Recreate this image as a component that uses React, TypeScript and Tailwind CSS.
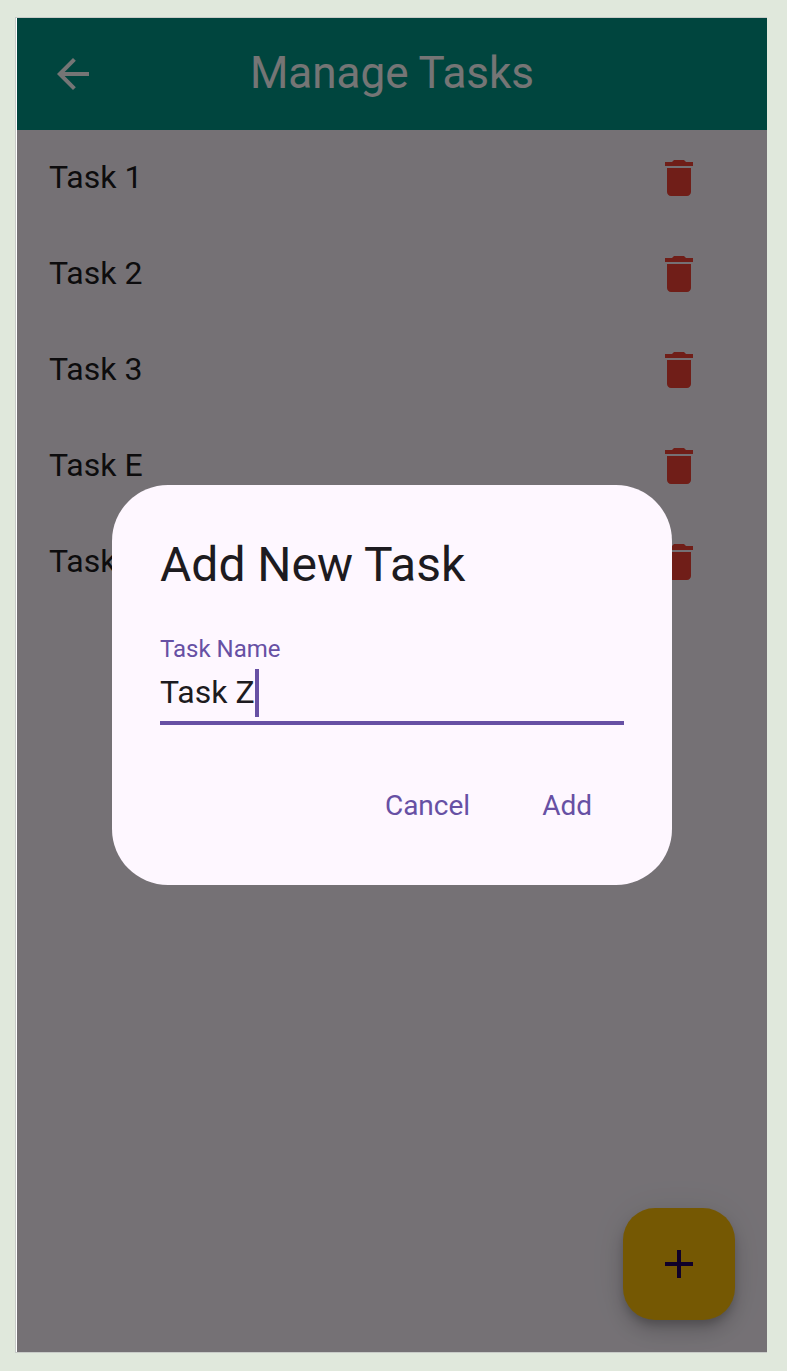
import { useState } from "react";

const tasks = ["Task 1", "Task 2", "Task 3", "Task E", "Task F"];

function Icon({ d }: { d: string }) {
  return (
    <svg viewBox="0 0 24 24" className="size-12 fill-current" aria-hidden="true">
      <path d={d} />
    </svg>
  );
}

const BACK = "M20 11H7.83l5.59-5.59L12 4l-8 8 8 8 1.41-1.41L7.83 13H20v-2z";
const TRASH =
  "M6 19c0 1.1.9 2 2 2h8c1.1 0 2-.9 2-2V7H6v12zM19 4h-3.5l-1-1h-5l-1 1H5v2h14V4z";
const PLUS = "M19 13h-6v6h-2v-6H5v-2h6V5h2v6h6v2z";

function Header() {
  return (
    <header className="grid h-28 grid-cols-[1fr_auto_1fr] items-center bg-[#009688] px-8 text-white">
      <button type="button" aria-label="Back" className="justify-self-start">
        <Icon d={BACK} />
      </button>
      <h1 className="pb-0.5 text-[44px] leading-[56px]">Manage Tasks</h1>
    </header>
  );
}

function TaskList() {
  return (
    <ul>
      {tasks.map((task) => (
        <li key={task} className="flex h-24 items-center justify-between pr-12 pl-8">
          <span className="pb-0.5 text-[32px] leading-[48px] text-[#1d1b20]">{task}</span>
          <button type="button" aria-label={`Delete ${task}`} className="p-4 text-[#f44336]">
            <Icon d={TRASH} />
          </button>
        </li>
      ))}
    </ul>
  );
}

function AddTaskDialog() {
  const [name, setName] = useState("Task Z");
  return (
    <form
      role="dialog"
      aria-labelledby="dialog-title"
      onSubmit={(event) => event.preventDefault()}
      className="w-full max-w-[560px] rounded-[56px] bg-[#fef7ff] p-12"
    >
      <h2 id="dialog-title" className="text-5xl leading-[64px] text-[#1d1b20]">
        Add New Task
      </h2>
      <div className="mt-8 border-b-4 border-[#6750a4] py-1">
        <label htmlFor="task-name" className="block text-2xl leading-8 text-[#6750a4]">
          Task Name
        </label>
        <div className="mt-1 flex">
          <input
            id="task-name"
            type="text"
            value={name}
            onChange={(event) => setName(event.target.value)}
            className="field-sizing-content h-12 max-w-full pb-0.5 text-[32px] text-[#1d1b20] caret-transparent outline-none"
          />
          <span className="h-12 w-1 shrink-0 bg-[#6750a4]" aria-hidden="true" />
        </div>
      </div>
      <div className="mt-12 flex justify-end gap-2 text-[28px] leading-10 text-[#6750a4]">
        <button type="button" className="h-16 rounded-full px-8 pt-0.5">
          Cancel
        </button>
        <button type="submit" className="h-16 rounded-full px-8 pt-0.5">
          Add
        </button>
      </div>
    </form>
  );
}

export default function App() {
  return (
    <div className="flex min-h-screen bg-[#e0e8dc] pt-[17px] pr-5 pb-[18px] pl-[15px] font-[Roboto,sans-serif]">
      <div className="flex grow border-y border-l border-[#c8cbc8] bg-white pl-px">
        <main className="relative grow overflow-hidden bg-[#fef7ff]">
          <Header />
          <TaskList />
          <button
            type="button"
            aria-label="Add task"
            className="absolute right-8 bottom-8 flex size-28 items-center justify-center rounded-[32px] bg-[#ffc107] text-[#21005d] shadow-[0_6px_10px_-2px_rgba(0,0,0,0.2),0_12px_20px_rgba(0,0,0,0.14),0_2px_36px_rgba(0,0,0,0.08)]"
          >
            <Icon d={PLUS} />
          </button>
          <div className="absolute inset-0 flex items-center justify-center bg-black/54 px-8">
            <AddTaskDialog />
          </div>
        </main>
      </div>
    </div>
  );
}
